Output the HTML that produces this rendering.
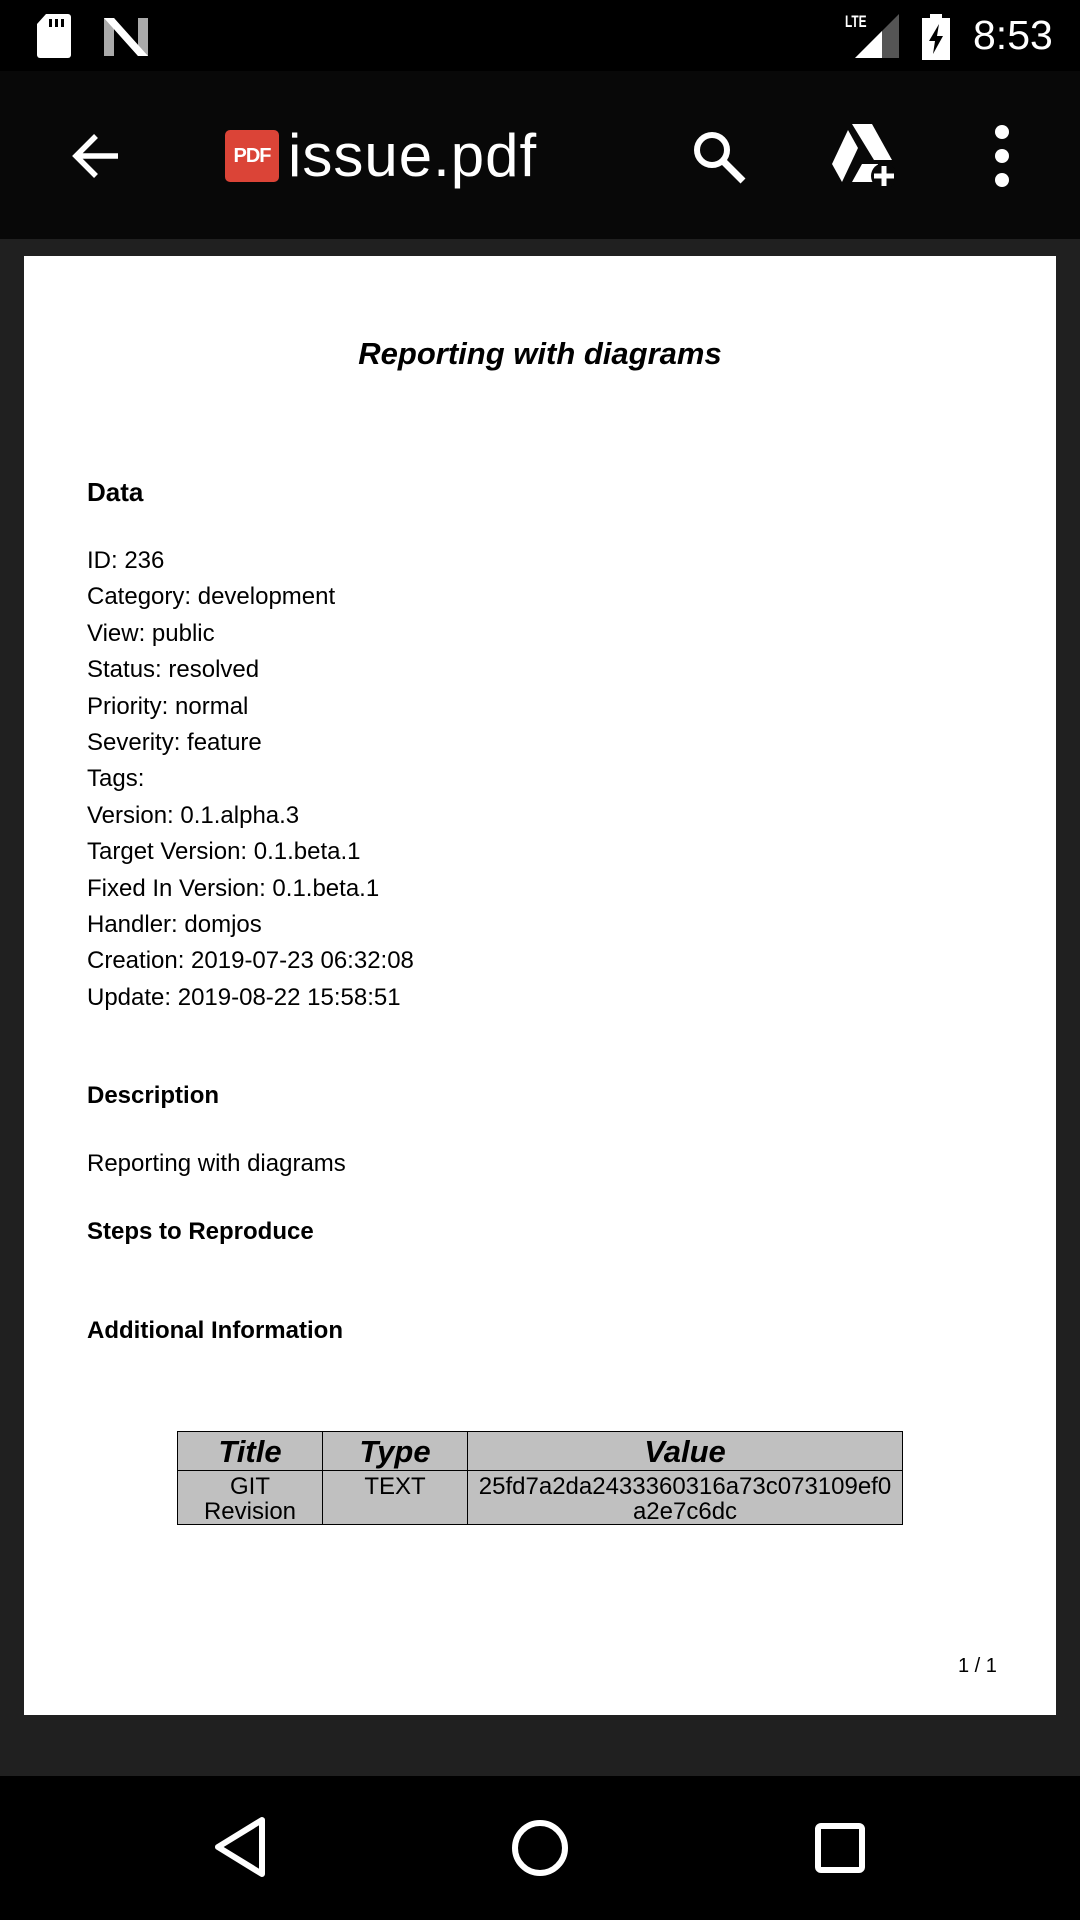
<!DOCTYPE html>
<html><head><meta charset="utf-8"><style>
*{margin:0;padding:0;box-sizing:border-box}
body{width:1080px;height:1920px;background:#202020;position:relative;overflow:hidden;font-family:"Liberation Sans",Arial,sans-serif}
.a{position:absolute}
#sb{left:0;top:0;width:1080px;height:71px;background:#000}
#tb{left:0;top:71px;width:1080px;height:168px;background:#080808}
#nav{left:0;top:1776px;width:1080px;height:144px;background:#000}
#page{left:24px;top:256px;width:1032px;height:1459px;background:#fff}
.t{position:absolute;color:#000;white-space:nowrap}
.l{left:87px;font-size:24px;line-height:36.4px}
.h{left:87px;font-size:24px;font-weight:bold}
table{position:absolute;left:177px;top:1431px;width:726px;border-collapse:collapse;background:#c0c0c0}
td{border:1.5px solid #000;text-align:center;vertical-align:top;font-size:24px;line-height:25px;padding-top:3px;font-family:"Liberation Sans Narrow","Liberation Sans",sans-serif}
th{border:1.5px solid #000;font-size:31px;font-style:italic;font-weight:bold;line-height:36px;height:37px;padding-top:2px;font-family:"Liberation Sans Narrow","Liberation Sans",sans-serif}
</style></head><body>
<div id="sb" class="a"></div>
<div id="tb" class="a"></div>
<div id="nav" class="a"></div>
<div id="page" class="a"></div>
<svg class="a" style="left:36px;top:14px" width="36" height="44" viewBox="0 0 36 44"><path d="M10 0H32a3 3 0 0 1 3 3V41a3 3 0 0 1-3 3H4a3 3 0 0 1-3-3V10Z" fill="#fff"/><rect x="13" y="5" width="3" height="8" fill="#000"/><rect x="19" y="5" width="3" height="8" fill="#000"/><rect x="25" y="5" width="3" height="8" fill="#000"/></svg>
<svg class="a" style="left:104px;top:18px" width="44" height="38" viewBox="0 0 44 38"><path d="M0 0H10L34 30V0H44V38H34L10 8V38H0Z" fill="#aaa"/><path d="M0 0H10L44 38H34Z" fill="#fff"/></svg>
<div class="t" style="left:845px;top:12px;color:#fff;font-size:17px;font-weight:bold;transform:scaleX(.7);transform-origin:left">LTE</div>
<svg class="a" style="left:855px;top:14px" width="44" height="44" viewBox="0 0 44 44"><path d="M44 0V44H0Z" fill="#555"/><path d="M27 17V44H0Z" fill="#fff"/></svg>
<svg class="a" style="left:922px;top:14px" width="28" height="46" viewBox="0 0 28 46"><path d="M8 0H20V4H28V46H0V4H8Z" fill="#fff"/><path d="M17 10L7 27H13L11 40L21 22H15Z" fill="#000"/></svg>
<div class="t" style="left:973px;top:12px;color:#fff;font-size:41px">8:53</div>
<svg class="a" style="left:70px;top:130px" width="52" height="52" viewBox="0 0 52 52"><path d="M48 26H8M26 6L6 26L26 46" stroke="#fff" stroke-width="5.5" fill="none"/></svg>
<div class="a" style="left:225px;top:130px;width:54px;height:52px;background:#db4437;border-radius:5px;color:#fff;font-weight:bold;font-size:20px;line-height:52px;text-align:center;letter-spacing:-1px">PDF</div>
<div class="t" style="left:288px;top:121px;color:#fff;font-size:60px;letter-spacing:1px">issue.pdf</div>
<svg class="a" style="left:690px;top:128px" width="60" height="60" viewBox="0 0 60 60"><circle cx="22" cy="22" r="15" stroke="#fff" stroke-width="6" fill="none"/><path d="M33 33L53 53" stroke="#fff" stroke-width="7"/></svg>
<svg class="a" style="left:830px;top:124px" width="68" height="64" viewBox="0 0 68 64"><path d="M22 0H42L62 36H44Z" fill="#fff"/><path d="M18 6L28 24L12 58L2 40Z" fill="#fff"/><path d="M32 40H48V58H22Z" fill="#fff"/><circle cx="54" cy="52" r="13" fill="#080808"/><path d="M54 42V62M44 52H64" stroke="#fff" stroke-width="5"/></svg>
<svg class="a" style="left:990px;top:124px" width="24" height="64" viewBox="0 0 24 64"><circle cx="12" cy="8" r="7" fill="#fff"/><circle cx="12" cy="32" r="7" fill="#fff"/><circle cx="12" cy="56" r="7" fill="#fff"/></svg>
<div class="t" style="left:0;width:1080px;text-align:center;top:336px;font-size:31px;font-weight:bold;font-style:italic">Reporting with diagrams</div>
<div class="t" style="left:87px;top:477px;font-size:26px;font-weight:bold">Data</div>
<div class="t l" style="top:543px">ID: 236<br>Category: development<br>View: public<br>Status: resolved<br>Priority: normal<br>Severity: feature<br>Tags:<br>Version: 0.1.alpha.3<br>Target Version: 0.1.beta.1<br>Fixed In Version: 0.1.beta.1<br>Handler: domjos<br>Creation: 2019-07-23 06:32:08<br>Update: 2019-08-22 15:58:51</div>
<div class="t h" style="top:1082px">Description</div>
<div class="t l" style="top:1146px">Reporting with diagrams</div>
<div class="t h" style="top:1218px">Steps to Reproduce</div>
<div class="t h" style="top:1317px">Additional Information</div>
<table><tr><th style="width:145px">Title</th><th style="width:145px">Type</th><th>Value</th></tr>
<tr><td>GIT<br>Revision</td><td>TEXT</td><td>25fd7a2da2433360316a73c073109ef0<br>a2e7c6dc</td></tr></table>
<div class="t" style="left:958px;top:1655px;font-size:20px">1 / 1</div>
<svg class="a" style="left:210px;top:1815px" width="60" height="64" viewBox="0 0 60 64"><path d="M52 5V59L8 32Z" stroke="#fff" stroke-width="6" fill="none" stroke-linejoin="round"/></svg>
<svg class="a" style="left:510px;top:1818px" width="60" height="60" viewBox="0 0 60 60"><circle cx="30" cy="30" r="25" stroke="#fff" stroke-width="6" fill="none"/></svg>
<svg class="a" style="left:814px;top:1822px" width="52" height="52" viewBox="0 0 52 52"><rect x="4" y="4" width="44" height="44" rx="3" stroke="#fff" stroke-width="6" fill="none"/></svg>
</body></html>
